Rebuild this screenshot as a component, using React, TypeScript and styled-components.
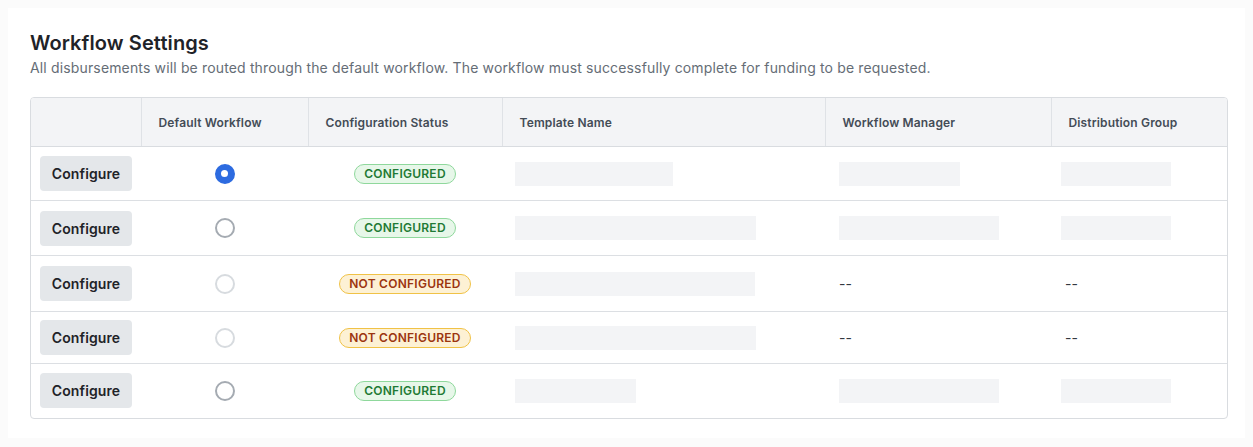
import styled, { createGlobalStyle } from "styled-components";

const GlobalStyle = createGlobalStyle`
  html, body {
    margin: 0;
    padding: 0;
    background: #fbfbfb;
  }
  body {
    font-family: Inter, "Noto Sans", "Liberation Sans", sans-serif;
    color: #1f2328;
  }
`;

const Page = styled.div`
  padding: 8px;
`;

const Card = styled.section`
  background: #ffffff;
  padding: 21px 17px 19px 22px;
`;

const Title = styled.h2`
  margin: 0;
  font-size: 20px;
  line-height: 28px;
  font-weight: 600;
  letter-spacing: 0.1px;
  color: #1f2328;
`;

const Subtitle = styled.p`
  margin: 1px 0 19px;
  font-size: 14px;
  line-height: 20px;
  letter-spacing: 0.15px;
  color: #656d76;
`;

const TableWrap = styled.div`
  border: 1px solid #d9dce0;
  border-radius: 4px;
  overflow: hidden;
`;

const Table = styled.table`
  width: 100%;
  border-collapse: collapse;
  table-layout: fixed;
`;

const HeadCell = styled.th`
  height: 48px;
  padding: 0 16px 0 17px;
  background: #f3f4f6;
  border-bottom: 1px solid #d9dce0;
  border-left: 1px solid #dfe2e6;
  text-align: left;
  font-size: 12px;
  font-weight: 600;
  letter-spacing: 0.15px;
  color: #444c56;
  &:first-child {
    border-left: none;
  }
`;

const Row = styled.tr`
  & + & td {
    border-top: 1px solid #dcdfe3;
  }
`;

const Cell = styled.td<{ $align?: "left" | "center"; $pad?: number }>`
  padding: 0 ${(p) => p.$pad ?? 10}px;
  text-align: ${(p) => p.$align ?? "left"};
  vertical-align: middle;
  font-size: 14px;
  color: #1f2328;
`;

const ConfigureButton = styled.button`
  height: 35px;
  width: 92px;
  border: none;
  border-radius: 4px;
  background: #e4e7ea;
  font-family: inherit;
  font-size: 14px;
  font-weight: 600;
  letter-spacing: 0.1px;
  color: #1f2328;
  cursor: pointer;
`;

const Radio = styled.span<{ $state: "checked" | "idle" | "disabled" }>`
  display: inline-block;
  vertical-align: middle;
  box-sizing: border-box;
  width: 20px;
  height: 20px;
  border-radius: 50%;
  border: 2px solid
    ${(p) =>
      p.$state === "checked" ? "#2d6be0" : p.$state === "idle" ? "#a5abb2" : "#d7dbdf"};
  background: ${(p) => (p.$state === "checked" ? "#2d6be0" : "#ffffff")};
  position: relative;
  &::after {
    content: "";
    display: ${(p) => (p.$state === "checked" ? "block" : "none")};
    position: absolute;
    left: 50%;
    top: 50%;
    width: 7px;
    height: 7px;
    margin: -3.5px 0 0 -3.5px;
    border-radius: 50%;
    background: #ffffff;
  }
`;

const Badge = styled.span<{ $ok: boolean }>`
  display: inline-block;
  vertical-align: middle;
  box-sizing: border-box;
  height: 20px;
  line-height: 18px;
  padding: 0 9px;
  border-radius: 10px;
  font-size: 12px;
  font-weight: 600;
  letter-spacing: 0.25px;
  border: 1px solid ${(p) => (p.$ok ? "#8fd89c" : "#f0c246")};
  background: ${(p) => (p.$ok ? "#e7f7e9" : "#fdf1d4")};
  color: ${(p) => (p.$ok ? "#1f7a35" : "#9c350f")};
`;

const Skeleton = styled.div<{ $w: number }>`
  width: ${(p) => p.$w}px;
  height: 24px;
  background: #f3f4f6;
`;

const Empty = styled.span`
  font-size: 14px;
  color: #333840;
`;

type RowData = {
  height: number;
  radio: "checked" | "idle" | "disabled";
  ok: boolean;
  template: number;
  manager?: number;
  group?: number;
};

const rows: RowData[] = [
  { height: 54, radio: "checked", ok: true, template: 158, manager: 121, group: 110 },
  { height: 55, radio: "idle", ok: true, template: 241, manager: 160, group: 110 },
  { height: 56, radio: "disabled", ok: false, template: 240 },
  { height: 52, radio: "disabled", ok: false, template: 241 },
  { height: 54, radio: "idle", ok: true, template: 121, manager: 160, group: 110 },
];

const columns = [
  { label: "", width: 110 },
  { label: "Default Workflow", width: 167 },
  { label: "Configuration Status", width: 194 },
  { label: "Template Name", width: 323 },
  { label: "Workflow Manager", width: 226 },
  { label: "Distribution Group", width: 178 },
];

const App = () => {
  return (
    <Page>
      <GlobalStyle />
      <Card>
        <Title>Workflow Settings</Title>
        <Subtitle>
          All disbursements will be routed through the default workflow. The workflow must
          successfully complete for funding to be requested.
        </Subtitle>
        <TableWrap>
          <Table>
            <colgroup>
              {columns.map((c, i) => (
                <col key={i} style={{ width: c.width }} />
              ))}
            </colgroup>
            <thead>
              <tr>
                {columns.map((c, i) => (
                  <HeadCell key={i}>{c.label}</HeadCell>
                ))}
              </tr>
            </thead>
            <tbody>
              {rows.map((r, i) => (
                <Row key={i} style={{ height: r.height }}>
                  <Cell $pad={9}>
                    <ConfigureButton>Configure</ConfigureButton>
                  </Cell>
                  <Cell $align="center">
                    <Radio $state={r.radio} />
                  </Cell>
                  <Cell $align="center">
                    <Badge $ok={r.ok}>{r.ok ? "CONFIGURED" : "NOT CONFIGURED"}</Badge>
                  </Cell>
                  <Cell $pad={13}>
                    <Skeleton $w={r.template} />
                  </Cell>
                  <Cell $pad={14}>
                    {r.manager ? <Skeleton $w={r.manager} /> : <Empty>--</Empty>}
                  </Cell>
                  <Cell $pad={10}>
                    {r.group ? <Skeleton $w={r.group} /> : <Empty>&nbsp;--</Empty>}
                  </Cell>
                </Row>
              ))}
            </tbody>
          </Table>
        </TableWrap>
      </Card>
    </Page>
  );
};

export default App;
